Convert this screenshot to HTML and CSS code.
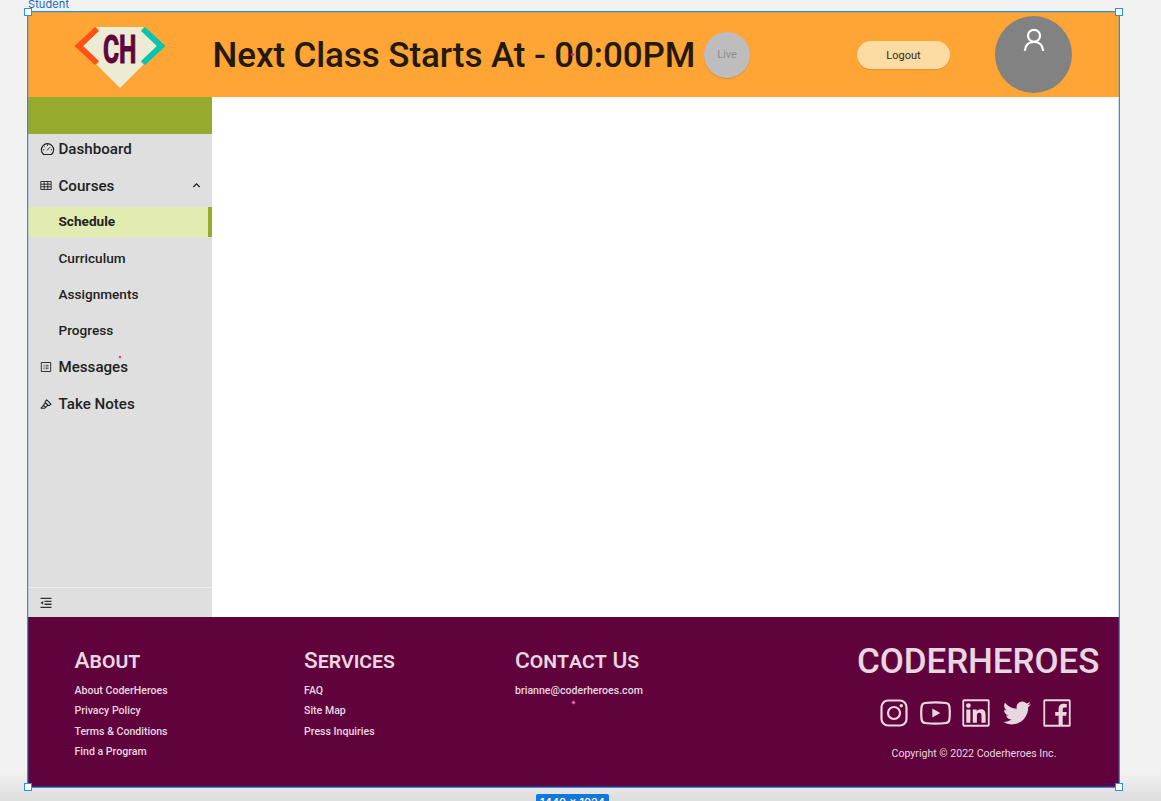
FILE: index.html
```html
<!DOCTYPE html>
<html lang="en">
<head>
<meta charset="utf-8">
<title>Student</title>
<link rel="stylesheet" href="styles.css">
</head>
<body>
<div class="canvas">
  <div class="frame-label">Student</div>
  <div class="frame">
    <header class="header">
      <svg class="logo" viewBox="0 0 92 64">
        <path fill="#ebecd3" d="M22 1H70L88 20 46 62 4 20Z"/>
        <path fill="#ffa535" d="M0 0H21L25 4 9 20 25 36 21 40 0 40ZM92 0H71L67 4 83 20 67 36 71 40 92 40Z"/>
        <path fill="#ff5117" d="M21 1L25 5 9 20 25 35 21 39 0.500 20Z"/>
        <path fill="#04c5b0" d="M71 1L67 5 83 20 67 35 71 39 91.500 20Z"/>
        <text class="logo-text" x="29" y="36.500" textLength="33.500" lengthAdjust="spacingAndGlyphs">CH</text>
      </svg>
      <h1 class="title">Next Class Starts At - 00:00PM</h1>
      <div class="live">Live</div>
      <button class="logout">Logout</button>
      <div class="avatar">
        <svg class="avatar-icon" viewBox="0 0 22 24" fill="none" stroke="#fff" stroke-width="2.200"><circle cx="11" cy="7.800" r="6"/><path d="M1.800 22.800C2.200 17 6 13.800 11 13.800S19.800 17 20.200 22.800"/></svg>
      </div>
    </header>
    <main class="body">
      <nav class="sidebar">
        <div class="sidebar-top"></div>
        <ul class="menu">
          <li class="item"><svg class="icon wide" viewBox="0 0 15 14" fill="none" stroke="#222"><path d="M3.600 12.500A6.100 6.100 0 1 1 11.400 12.500Z" stroke-width="1.200"/><path d="M7 8.500L10 5.200M7.500 2.500V4M3 7.800H4.400M10.800 7.800H12M4.300 4.500L5.200 5.400" stroke-width=".9"/></svg><span>Dashboard</span></li>
          <li class="item"><svg class="icon" viewBox="0 0 12 12" fill="none" stroke="#222" stroke-width=".9"><path d="M.8 1.500H11.200V9.500H.8ZM.8 4.200H11.200M.8 6.800H11.200M4.200 1.500V9.500M7.800 1.500V9.500"/></svg><span>Courses</span><svg class="chevron" viewBox="0 0 8 6" fill="none" stroke="#222" stroke-width="1.100"><path d="M1.200 4.300L4 1.500 6.800 4.300"/></svg></li>
          <li class="item sub active"><span>Schedule</span></li>
          <li class="item sub"><span>Curriculum</span></li>
          <li class="item sub"><span>Assignments</span></li>
          <li class="item sub"><span>Progress</span></li>
          <li class="item"><svg class="icon" viewBox="0 0 12 12" fill="none" stroke="#333" stroke-width="1"><path d="M1.300 1.500H10.700V10.500H1.300Z"/><path d="M3.500 4.300H4.700M5.500 4.300H8.500M3.500 6H4.700M5.500 6H8.500M3.500 7.700H4.700M5.500 7.700H8.500" stroke-width=".8"/></svg><span>Messages</span></li>
          <li class="item"><svg class="icon" viewBox="0 0 12 12" fill="none" stroke="#222" stroke-width="1.100" stroke-linejoin="round"><path d="M6.700 1.800L11 6.100 9.300 7.500 7.500 7.500 5.500 9.300 3.400 7.200 5.200 5.200 5.200 3.500ZM5.200 4.500L8.300 7.500M3.400 7.700L1 10.200H4.600L5.400 9.300"/></svg><span>Take Notes</span></li>
        </ul>
        <div class="collapse"><svg class="icon" viewBox="0 0 12 12"><path d="M.5 .7H11.500V2H.5ZM4.500 3.700H11.500V5H4.500ZM4.500 6.600H11.500V7.900H4.500ZM.5 9.700H11.500V11H.5ZM.5 5.800L3.200 3.900V7.700Z" fill="#333"/></svg></div>
      </nav>
      <section class="content"></section>
    </main>
    <footer class="footer">
      <div class="col"><h2>About</h2><a>About CoderHeroes</a><a>Privacy Policy</a><a>Terms &amp; Conditions</a><a>Find a Program</a></div>
      <div class="col"><h2>Services</h2><a>FAQ</a><a>Site Map</a><a>Press Inquiries</a></div>
      <div class="col"><h2>Contact Us</h2><a>brianne@coderheroes.com</a></div>
      <div class="brand">
        <div class="brand-name">CODERHEROES</div>
        <div class="social">
          <svg width="28" height="28" viewBox="0 0 28 28" fill="none" stroke="currentColor" stroke-width="2.200"><rect x="1.500" y="1.500" width="25" height="25" rx="6.500"/><circle cx="14" cy="14" r="6"/><circle cx="21.300" cy="6.700" r="1.700" fill="currentColor" stroke="none"/></svg>
          <svg width="31" height="28" viewBox="0 0 31 28"><path d="M5 4Q15.500 2.600 26 4 29 4.400 29.400 7.500 30.200 14 29.400 20.500 29 23.600 26 24 15.500 25.400 5 24 2 23.600 1.600 20.500 .8 14 1.600 7.500 2 4.400 5 4Z" fill="none" stroke="currentColor" stroke-width="2.200"/><path fill="currentColor" d="M12.300 9.500V18.500L20.300 14Z"/></svg>
          <svg class="linkedin" width="28" height="28" viewBox="0 0 28 28"><rect x="1.250" y="1.250" width="25.500" height="25.500" rx=".8" fill="none" stroke="currentColor" stroke-width="1.800"/><path fill="currentColor" d="M4.300 10.500H8.400V23.700H4.300ZM10.800 10.500H14.700V12.300C15.400 11 16.800 10.200 18.800 10.200 22.800 10.200 23.600 12.800 23.600 16.400V23.700H19.500V17.200C19.500 15.500 19.400 13.700 17.300 13.700 15.200 13.700 14.900 15.300 14.900 17.100V23.700H10.800Z"/><circle cx="6.400" cy="6.600" r="2.400" fill="currentColor"/></svg>
          <svg width="28" height="28" viewBox="0 0 24 24"><path fill="currentColor" d="M23.950 4.570a10 10 0 0 1-2.820.77 4.960 4.960 0 0 0 2.160-2.720c-.95.550-2 .950-3.130 1.180a4.920 4.920 0 0 0-8.380 4.480C7.690 8.100 4.070 6.130 1.640 3.160a4.820 4.820 0 0 0-.67 2.480c0 1.710.87 3.210 2.190 4.100a4.900 4.900 0 0 1-2.230-.62v.06a4.920 4.920 0 0 0 3.950 4.830 5 5 0 0 1-2.210.08 4.940 4.940 0 0 0 4.600 3.420A9.870 9.870 0 0 1 0 19.540a13.990 13.990 0 0 0 7.550 2.210c9.050 0 14-7.500 14-13.980 0-.21 0-.42-.02-.63a9.940 9.940 0 0 0 2.460-2.550z"/></svg>
          <svg width="28" height="28" viewBox="0 0 28 28"><rect x="1.250" y="1.250" width="25.500" height="25.500" rx=".6" fill="none" stroke="currentColor" stroke-width="1.800"/><path fill="currentColor" d="M15.600 26.500V16.800H12.200V13H15.600V10.200C15.600 6.600 17.600 4.800 21 4.800L23.800 5V8.500H21.900C20.100 8.500 19.700 9.300 19.700 10.600V13H23.700L23.200 16.800H19.700V26.500Z"/></svg>
        </div>
        <div class="copyright">Copyright © 2022 Coderheroes Inc.</div>
      </div>
    </footer>
    <div class="selection"><i class="handle tl"></i><i class="handle tr"></i><i class="handle bl"></i><i class="handle br"></i></div>
    <i class="anchor a1"></i><i class="anchor a2"></i><i class="anchor a3"></i>
  </div>
  <div class="size-badge">1440 × 1024</div>
</div>
</body>
</html>
```
FILE: styles.css
```css
* { box-sizing: border-box; }
body { margin: 0; font-family: Roboto, "Liberation Sans", sans-serif; color: #222; }
.canvas { width: 1161px; height: 801px; overflow: hidden; background: linear-gradient(#f2f2f2 0, #f2f2f2 770px, #dedede 801px); }
.frame-label { height: 12px; padding-left: 28px; font: 11px/9px Inter, sans-serif; letter-spacing: .1px; color: #1a66bd; }
.frame { position: relative; width: 1090.500px; height: 775px; margin-left: 28px; background: #fff; }
.header { display: flex; align-items: center; height: 85px; background: #ffa535; }
.logo { width: 92px; height: 64px; margin-left: 46px; margin-top: 7px; flex: none; }
.logo-text { font-size: 38.500px; font-weight: 700; fill: #60033c; stroke: #60033c; stroke-width: 1px; }
.title { margin: 1px 0 0 46.500px; width: 491.500px; flex: none; font-size: 35px; font-weight: 500; line-height: 43px; letter-spacing: -.1px; white-space: nowrap; color: #231a0b; }
.live { width: 46px; height: 46px; border-radius: 50%; background: #bdbdbd; color: #8d8d8d; font-size: 11px; line-height: 46px; text-align: center; box-shadow: 0 1px 1px #0002; }
.logout { width: 93px; height: 28px; margin-left: 107px; padding: 0; border: 0; border-radius: 14px; background: #fddca4; color: #332a20; font: 11px/29px Roboto, sans-serif; box-shadow: 0 1px 1px #0002; }
.avatar { width: 77px; height: 77px; margin-left: 45.300px; border-radius: 50%; background: #828282; display: flex; justify-content: center; }
.avatar-icon { width: 22px; height: 24px; margin-top: 12px; }
.body { display: flex; height: 520px; }
.sidebar { display: flex; flex-direction: column; width: 184px; background: #dfdfdf; }
.sidebar-top { height: 37px; background: #96ab2e; }
.menu { list-style: none; margin: 0; padding: 0; flex: 1; display: flex; flex-direction: column; gap: 6.070px; }
.item { display: flex; align-items: center; height: 30.300px; padding: 0 11px 0 12px; font-size: 15.130px; font-weight: 500; white-space: nowrap; }
.item .icon { margin-right: 6.500px; }
.icon { width: 12px; height: 12px; flex: none; }
.item .icon.wide { width: 15px; height: 14px; margin-right: 3.500px; }
.chevron { width: 9px; height: 7px; margin-left: auto; }
.sub { padding: 0 0 1.200px 30.500px; font-size: 13.600px; }
.active { background: #e2ebb0; border-right: 4px solid #96ab2e; font-weight: 700; }
.collapse { display: flex; align-items: center; height: 30px; padding: 0 0 0 12px; border-top: 1px solid #ededed; }
.content { flex: 1; background: #fff; }
.footer { display: grid; grid-template-columns: 229.500px 211px 342px 1fr; height: 170px; padding-left: 46.500px; background: #60033c; color: #e8d6e0; }
.col { display: flex; flex-direction: column; padding-top: 30px; }
.col h2 { margin: 0 0 7px; font-size: 22.700px; line-height: 27px; font-weight: 500; font-variant: small-caps; white-space: nowrap; }
.col a { font-size: 10.590px; line-height: 20.450px; font-weight: 500; white-space: nowrap; }
.brand { display: flex; flex-direction: column; width: 242px; padding-top: 24px; }
.brand-name { font-size: 35px; line-height: 42px; font-weight: 500; letter-spacing: -.1px; white-space: nowrap; }
.social { display: flex; gap: 12px; margin: 16px 0 0 22.500px; }
.linkedin { margin: 0 1.200px 0 -1px; }
.copyright { margin: 18px 0 0 34.500px; font-size: 10.590px; line-height: 18px; white-space: nowrap; }
.selection { position: absolute; inset: -1px; border: 1.500px solid #2c91e2; box-shadow: inset 0 0 0 .5px #2c91e288; }
.handle { position: absolute; width: 8px; height: 8px; background: #fff; border: 1.500px solid #2c91e2; }
.tl { left: -4px; top: -4px; } .tr { right: -4px; top: -4px; }
.bl { left: -4px; bottom: -4px; } .br { right: -4px; bottom: -4px; }
.anchor { position: absolute; width: 3px; height: 3px; background: #e815a4; transform: rotate(45deg); }
.a1 { left: 543px; top: 41px; } .a2 { left: 91px; top: 344px; width: 2px; height: 2px; } .a3 { left: 543.500px; top: 688.500px; background: #ff51b8; }
.size-badge { position: relative; width: 73px; height: 17px; margin: 7px 0 0 536px; border-radius: 2px; background: #1578d8; color: #fff; font: 500 11px/17px Inter, sans-serif; text-align: center; }
```
